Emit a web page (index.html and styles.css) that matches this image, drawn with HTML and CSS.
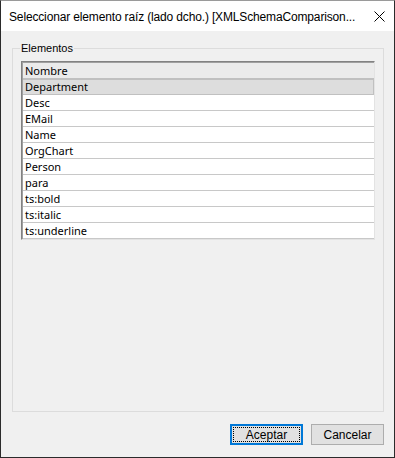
FILE: index.html
```html
<!DOCTYPE html>
<html>
<head>
<meta charset="utf-8">
<link rel="stylesheet" href="styles.css">
</head>
<body>
<div class="window">
  <div class="titlebar">
    <span class="title">Seleccionar elemento raíz (lado dcho.) [XMLSchemaComparison...</span>
    <svg class="close" width="11" height="11" viewBox="0 0 11 11"><path d="M0.5 0.5 L10.5 10.5 M10.5 0.5 L0.5 10.5" stroke="#000" stroke-width="1" fill="none"/></svg>
  </div>
  <div class="content">
    <fieldset class="group">
      <legend class="legend">Elementos</legend>
      <div class="list">
        <div class="row header">Nombre</div>
        <div class="row selected">Department</div>
        <div class="row">Desc</div>
        <div class="row">EMail</div>
        <div class="row">Name</div>
        <div class="row">OrgChart</div>
        <div class="row">Person</div>
        <div class="row">para</div>
        <div class="row">ts:bold</div>
        <div class="row">ts:italic</div>
        <div class="row">ts:underline</div>
      </div>
    </fieldset>
    <div class="buttons">
      <button class="btn default"><span class="focus">Aceptar</span></button>
      <button class="btn">Cancelar</button>
    </div>
  </div>
</div>
</body>
</html>
```

FILE: styles.css
```css
html, body {
  margin: 0;
  padding: 0;
  background: #f0f0f0;
}
.window {
  box-sizing: border-box;
  width: 395px;
  height: 458px;
  border: 1px solid #2b2b2b;
  border-top-color: #9a9a9a;
  background: #f0f0f0;
  display: flex;
  flex-direction: column;
  font-family: "Liberation Sans", Arial, sans-serif;
}
.titlebar {
  height: 30px;
  background: #ffffff;
  display: flex;
  align-items: center;
  justify-content: space-between;
  padding: 0 9px 0 8px;
  flex: none;
}
.title {
  font-size: 12px;
  letter-spacing: -0.15px;
  color: #000;
  white-space: nowrap;
  margin-top: 1px;
}
.close {
  display: block;
}
.content {
  flex: 1;
  display: flex;
  flex-direction: column;
  padding: 11px 10px 12px 11px;
}
.group {
  margin: 0;
  padding: 6px 8px 11px 8px;
  border: 1px solid #dcdcdc;
  min-width: 0;
  height: 370px;
  box-sizing: border-box;
  display: flex;
  flex-direction: column;
}
.legend {
  font-size: 11px;
  padding: 0 1px;
  margin-left: -1px;
  color: #000;
  line-height: 13px;
}
.list {
  flex: 1;
  background: #ffffff;
  border: 1px solid;
  border-color: #828282 #e3e3e3 #e3e3e3 #828282;
  box-shadow: inset 1px 1px 0 #a0a0a0;
  padding: 1px 0 0 1px;
}
.row {
  box-sizing: border-box;
  height: 16px;
  border-bottom: 1px solid #c8c8c8;
  font-family: "Noto Sans", "Liberation Sans", sans-serif;
  font-size: 11px;
  line-height: 15px;
  padding-left: 2px;
  color: #000;
}
.header {
  background: #ebebeb;
  border-bottom: 1px solid #c0c0c0;
}
.selected {
  background: #dddddd;
  border: 1px solid #c0c0c0;
  border-left: none;
  line-height: 14px;
}
.buttons {
  margin-top: 12px;
  display: flex;
  justify-content: flex-end;
  gap: 8px;
}
.btn {
  box-sizing: border-box;
  width: 73px;
  height: 21px;
  padding: 0;
  margin: 0;
  background: #e1e1e1;
  border: 1px solid #adadad;
  font-family: "Liberation Sans", Arial, sans-serif;
  font-size: 12px;
  color: #000;
  display: flex;
  align-items: center;
  justify-content: center;
}
.btn.default {
  border: 2px solid #0078d7;
  padding: 1px;
}
.focus {
  box-sizing: border-box;
  width: 100%;
  height: 100%;
  border: 1px dotted #000;
  display: flex;
  align-items: center;
  justify-content: center;
}
```
